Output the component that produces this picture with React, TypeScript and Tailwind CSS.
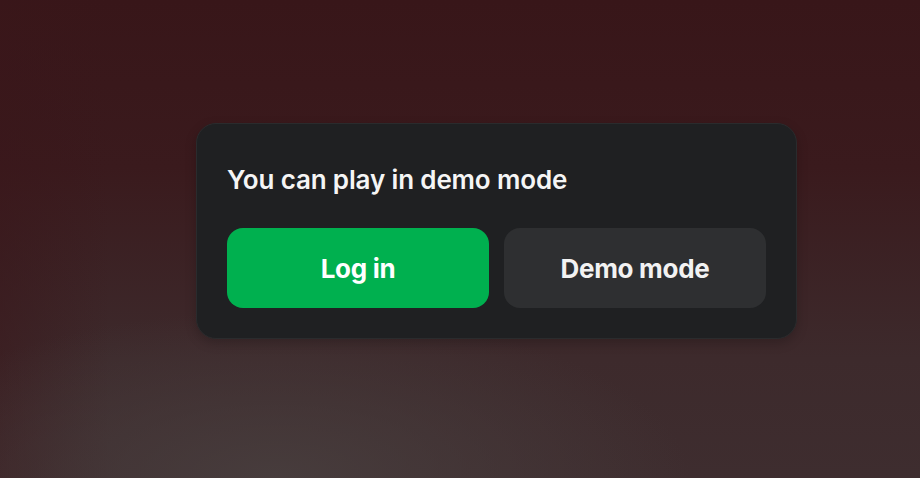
export default function App() {
  return (
    <div
      className="w-[920px] h-[478px] overflow-hidden pl-[196px] pt-[123px]"
      style={{
        background:
          "radial-gradient(ellipse 45% 35% at 30% 100%, rgba(72,62,62,0.9) 0%, rgba(72,62,62,0) 100%), linear-gradient(to right, rgba(58,22,26,0.5) 0%, rgba(58,22,26,0) 12%), linear-gradient(to bottom, #381619 0%, #3a1a1d 35%, #3d2a2c 75%, #3e2d2f 100%)",
        fontFamily: "Inter, 'Noto Sans', sans-serif",
      }}
    >
      <div className="w-[601px] h-[216px] rounded-[20px] border border-[#2a2b2d] bg-[#1f2022] px-[30px] pt-[40px] shadow-[0_4px_12px_rgba(0,0,0,0.2)]">
        <div className="text-[26px] leading-[32px] font-semibold text-[#f5f5f5] tracking-[-0.15px]">
          You can play in demo mode
        </div>
        <div className="mt-[32px] flex gap-[15px]">
          <button className="h-[80px] flex-1 rounded-[16px] bg-[#00b04f] text-[26px] font-bold text-white tracking-[-0.3px]">
            Log in
          </button>
          <button className="h-[80px] flex-1 rounded-[16px] bg-[#2e2f31] text-[26px] font-bold text-[#f2f2f2] tracking-[-0.3px]">
            Demo mode
          </button>
        </div>
      </div>
    </div>
  );
}
